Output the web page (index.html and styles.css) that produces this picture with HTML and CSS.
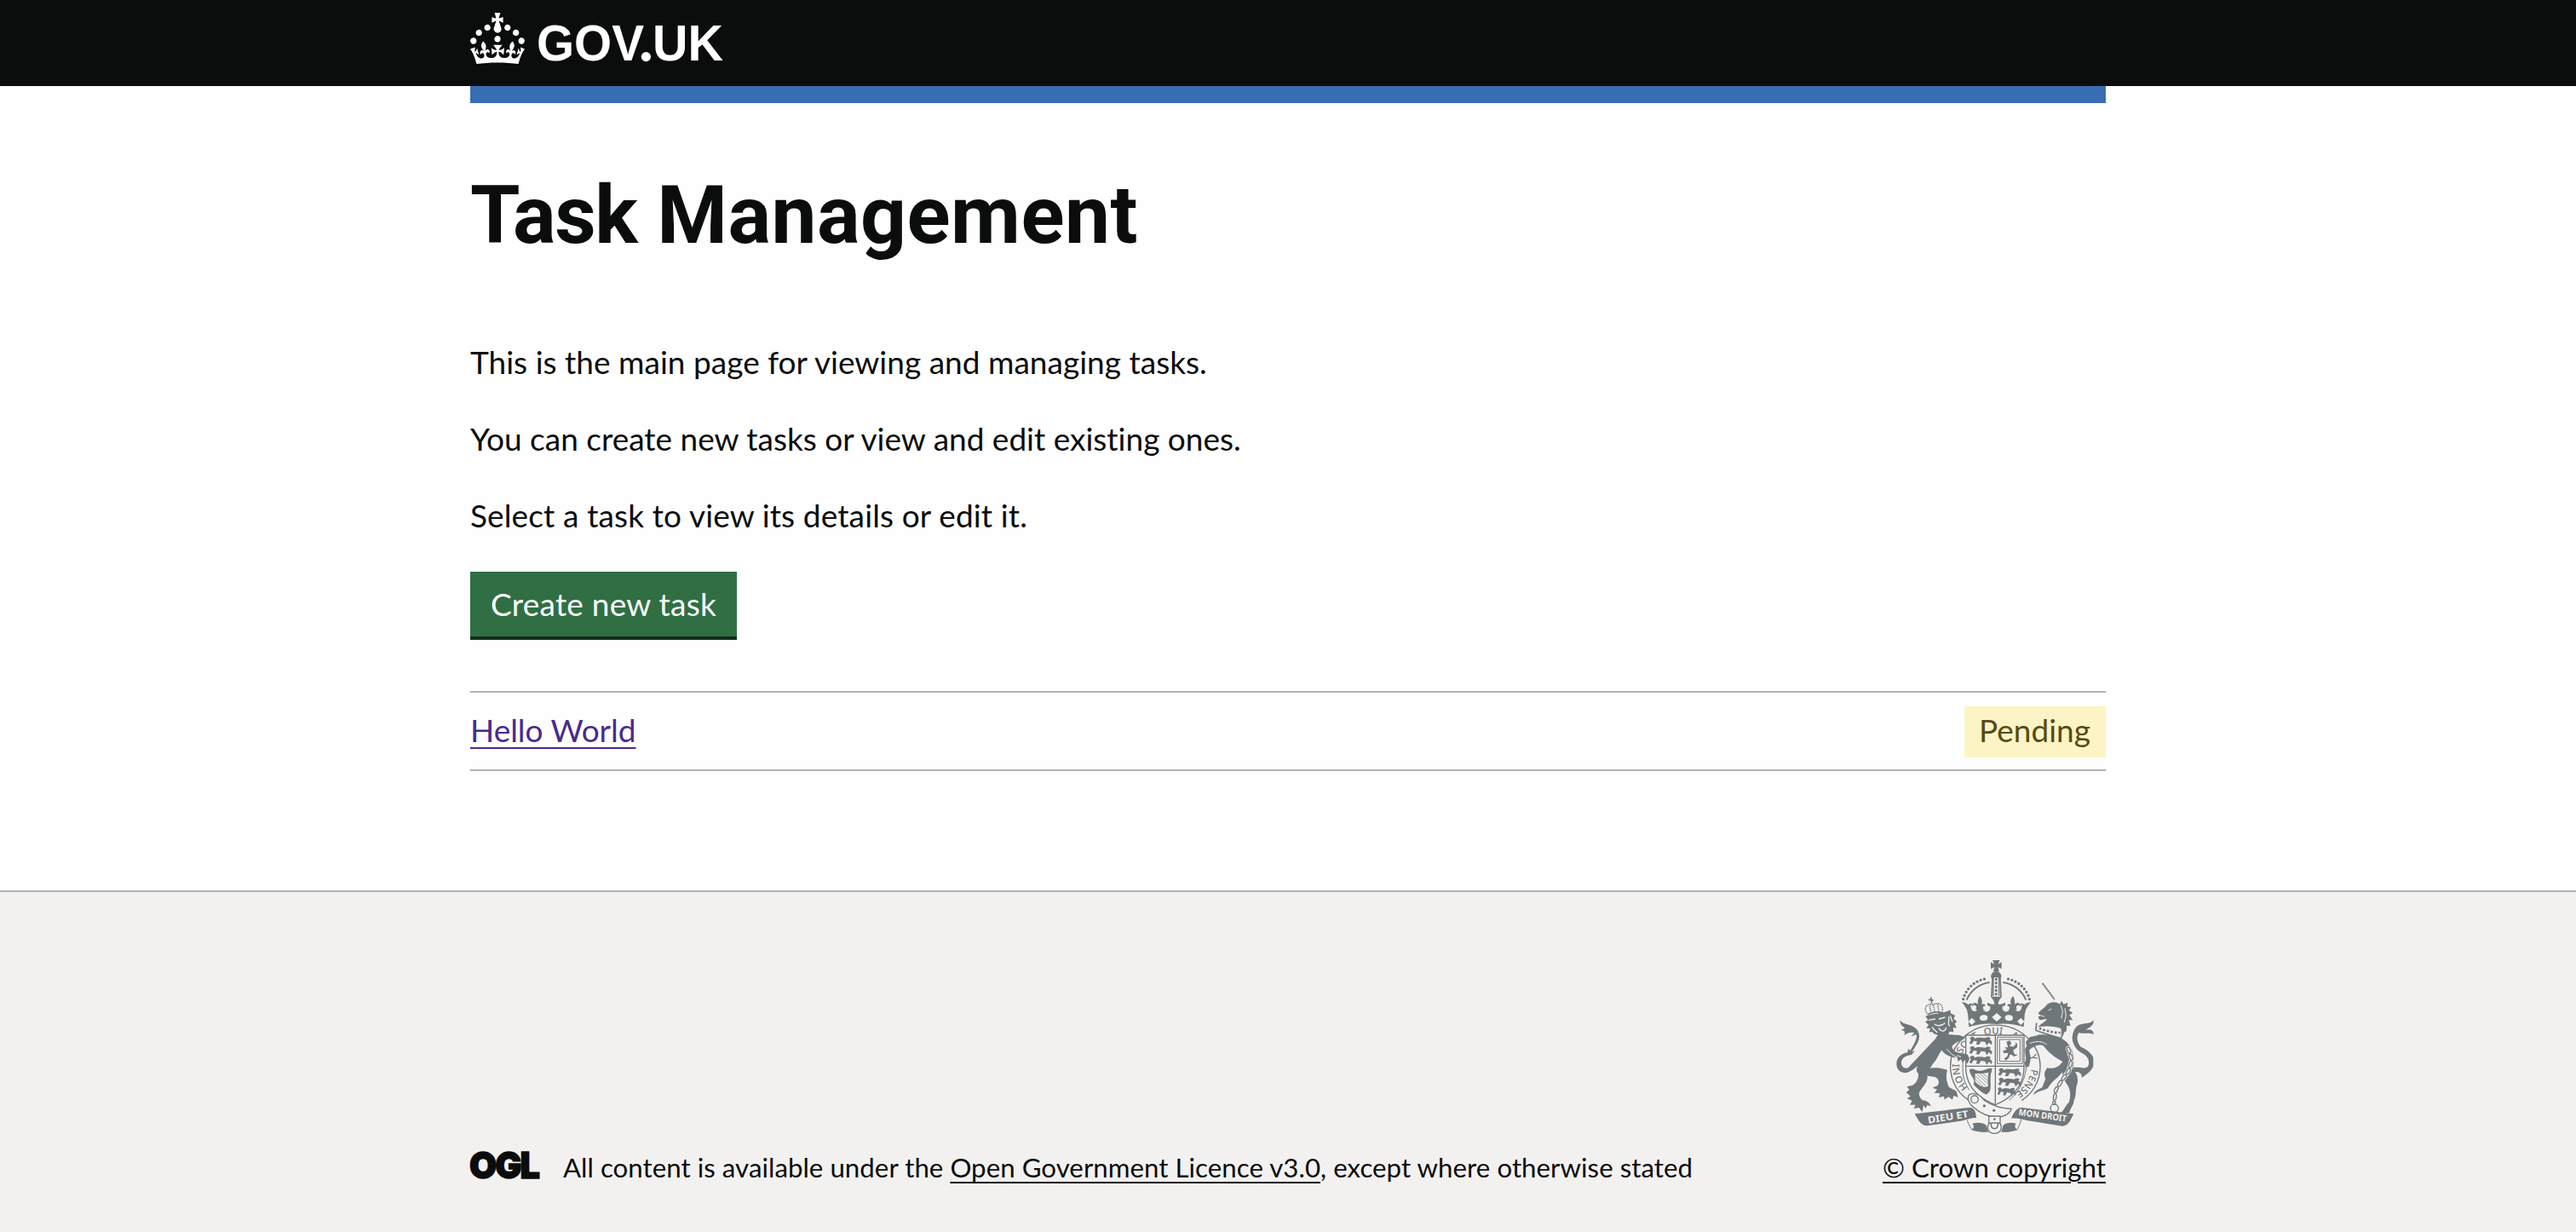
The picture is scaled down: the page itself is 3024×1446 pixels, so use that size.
FILE: index.html
```html
<!DOCTYPE html>
<html lang="en">
<head>
<meta charset="utf-8">
<title>Task Management - GOV.UK</title>
<link rel="stylesheet" href="styles.css">
</head>
<body>
<header class="header">
  <div class="container">
    <a class="header-logo" href="#" aria-label="GOV.UK">
      <svg viewBox="0 0 148 30" width="296" height="60">
        <path fill="#fff" d="M22.6 10.4c-1 .4-2-.1-2.4-1-.4-.9.1-2 1-2.4.9-.4 2 .1 2.4 1s-.1 2-1 2.4m-5.9 6.7c-.9.4-2-.1-2.4-1-.4-.9.1-2 1-2.4.9-.4 2 .1 2.4 1s-.1 2-1 2.4m10.8-3.7c-1 .4-2-.1-2.4-1-.4-.9.1-2 1-2.4.9-.4 2 .1 2.4 1s0 2-1 2.4m3.3 4.8c-1 .4-2-.1-2.4-1-.4-.9.1-2 1-2.4.9-.4 2 .1 2.4 1s-.1 2-1 2.4M17 4.7l2.3 1.2V2.5l-2.3.7-.2-.2.9-3h-3.4l.9 3-.2.2c-.1.1-2.3-.7-2.3-.7v3.4L15 4.7c.1.1.1.2.2.2l-1.3 4c-.1.2-.1.4-.1.6 0 1.1.8 2 1.9 2.2h.7c1-.2 1.9-1.1 1.9-2.1 0-.2 0-.4-.1-.6l-1.3-4c-.1-.2 0-.2.1-.3m-7.6 5.7c.9.4 2-.1 2.4-1 .4-.9-.1-2-1-2.4-.9-.4-2 .1-2.4 1s0 2 1 2.4m-5 3c.9.4 2-.1 2.4-1 .4-.9-.1-2-1-2.4-.9-.4-2 .1-2.4 1s.1 2 1 2.4m-3.2 4.8c.9.4 2-.1 2.4-1 .4-.9-.1-2-1-2.4-.9-.4-2 .1-2.4 1s0 2 1 2.4m14.8 11c4.4 0 8.6.3 12.3.8 1.1-4.5 2.4-7 3.7-8.8l-2.5-.9c.2 1.3.3 1.9 0 2.7-.4-.4-.8-1.1-1.1-2.3l-1.2 4c.7-.5 1.3-.8 2-.9-1.1 2.5-2.6 3.1-3.5 3-1.1-.2-1.7-1.2-1.5-2.1.3-1.2 1.5-1.5 2.1-.1 1.1-2.3-.8-3-2-2.3 1.9-1.9 2.1-3.5.6-5.6-2.1 1.6-2.1 3.2-1.2 5.5-1.2-1.4-3.2-.6-2.5 1.6.9-1.4 2.1-.5 1.9.8-.2 1.1-1.7 2.1-3.5 1.9-2.7-.2-2.9-2.1-2.9-3.6.7-.1 1.9.5 2.9 1.9l.4-4.3c-1.1 1.1-2.1 1.4-3.2 1.4.4-1.2 2.1-3 2.1-3h-5.4s1.7 1.9 2.1 3c-1.1 0-2.1-.2-3.2-1.4l.4 4.3c1-1.4 2.2-2 2.9-1.9-.1 1.5-.2 3.4-2.9 3.6-1.9.2-3.4-.8-3.5-1.9-.2-1.3 1-2.2 1.9-.8.7-2.3-1.2-3-2.5-1.6.9-2.2.9-3.9-1.2-5.5-1.5 2-1.3 3.7.6 5.6-1.2-.7-3.1 0-2 2.3.6-1.4 1.8-1.1 2.1.1.2.9-.3 1.9-1.5 2.1-.9.2-2.4-.5-3.5-3 .6 0 1.2.3 2 .9l-1.2-4c-.3 1.1-.7 1.9-1.1 2.3-.3-.8-.2-1.4 0-2.7l-2.9.9C1.3 23 2.6 25.5 3.7 30c3.7-.5 7.9-.8 12.3-.8"/>
        <text class="logo-text" x="39" y="28"><tspan textLength="63" lengthAdjust="spacingAndGlyphs">GOV</tspan></text>
        <circle cx="103.2" cy="25.8" r="2.8" fill="#fff"/>
        <text class="logo-text" x="107" y="28"><tspan textLength="41.5" lengthAdjust="spacingAndGlyphs">UK</tspan></text>
      </svg>
    </a>
  </div>
</header>

<main class="container main">
  <h1 class="heading"><span class="heading-first">Task</span> Management</h1>
  <p class="body-text body-text-first">This is the main page for viewing and managing tasks.</p>
  <p class="body-text">You can create new tasks or view and edit existing ones.</p>
  <p class="body-text body-text-wide">Select a task to view its details or edit it.</p>
  <button class="button" type="button">Create new task</button>
  <ul class="task-list">
    <li class="task">
      <a class="task-link" href="#">Hello World</a>
      <strong class="tag">Pending</strong>
    </li>
  </ul>
</main>

<footer class="footer">
  <div class="container footer-row">
    <div class="licence">
      <svg class="ogl" viewBox="0 0 83 34" width="83" height="34" role="img" aria-label="OGL">
        <text class="ogl-text" x="-1" y="32.2" textLength="81" lengthAdjust="spacingAndGlyphs">OGL</text>
      </svg>
      <span class="licence-text">All content is available under the <a class="footer-link" href="#">Open Government Licence v3.0</a>, except where otherwise stated</span>
    </div>
    <div class="copyright">
      <svg class="crest" viewBox="75 45 705 621" width="235" height="207" aria-hidden="true">
        <defs>
          <path id="garter" d="M427 537A127 113 0 0 1 300 424A127 113 0 0 1 427 311A127 113 0 0 1 554 424A127 113 0 0 1 427 537"/>
          <g id="beast">
            <path d="M2 8C8 0 18 2 20 10C28 4 42 6 56 8C64 4 72 2 76 10L70 14C80 16 84 24 78 32L70 24L62 34L56 22L42 20L34 32L24 30L28 20L16 18L8 30L0 26L6 16Z"/>
          </g>
          <g id="half-crown">
            <path class="line" stroke-width="6" d="M326 191C340 158 370 134 407 129"/>
            <path class="dots" d="M314 188C324 150 356 120 402 115"/>
            <path class="line" stroke-width="5" d="M417 116L414 180"/>
            <path d="M432 240H330L327 226C322 216 316 207 309 198C318 200 326 202 332 207C338 202 344 202 349 208L344 222C352 232 362 226 360 214C354 206 346 212 348 204C354 198 362 202 365 207C366 196 364 190 372 177C382 190 382 198 378 208C384 202 392 204 392 212C386 212 380 216 386 224C394 232 404 224 408 212C400 214 396 206 400 200C408 204 416 208 424 206C424 196 418 188 411 180H432Z"/>
            <path class="hole" d="M340 208C348 210 350 228 364 226C356 236 340 232 340 208ZM384 226C394 228 404 222 409 212C412 232 394 238 384 226Z"/>
            <path d="M330 236H432V276C398 272 366 276 334 286Z"/>
            <ellipse class="hole" cx="386" cy="254" rx="14" ry="10" transform="rotate(-8 386 254)"/>
            <path class="hole" d="M344 254L357 266L344 279L332 267Z"/>
          </g>
        </defs>

        <g class="ink">
          <!-- crown -->
          <path d="M417 51H443L436 65L449 58V82L436 75L441 90H419L425 75L411 82V58L424 65Z"/>
          <path d="M412 112C410 98 420 90 430 90C440 90 450 98 448 112L442 122V178H418V122Z"/>
          <path class="cut" stroke-width="16" d="M430 112V178"/>
          <path class="line" stroke-width="8" stroke-dasharray="9 4" d="M430 114V177"/>
          <use href="#half-crown"/>
          <use href="#half-crown" transform="translate(861 0) scale(-1 1)"/>
          <path class="hole" d="M432 237L449 252L432 267L415 252Z"/>

          <!-- garter -->
          <path class="line" stroke-width="4" d="M334 545A158 147 0 1 1 520 545"/>
          <path class="line" stroke-width="3" d="M335 508C316 480 308 450 314 400M536 400C540 450 520 506 476 544"/>
          <text class="motto"><textPath href="#garter" startOffset="106">HONI</textPath></text>
          <text class="motto"><textPath href="#garter" startOffset="232">SO</textPath></text>
          <text class="motto"><textPath href="#garter" startOffset="298">T</textPath></text>
          <text class="motto"><textPath href="#garter" startOffset="338">QUI</textPath></text>
          <text class="motto"><textPath href="#garter" startOffset="432">A</textPath></text>
          <text class="motto"><textPath href="#garter" startOffset="527">Y</textPath></text>
          <text class="motto"><textPath href="#garter" startOffset="576">PENSE</textPath></text>

          <!-- shield -->
          <path class="panel" d="M323 315H528V432C526 480 500 530 427 560C350 530 325 480 323 432Z"/>
          <path class="line" stroke-width="4" d="M427 315V556M323 424H528"/>
          <use href="#beast" transform="translate(335 317)"/>
          <use href="#beast" transform="translate(335 351)"/>
          <use href="#beast" transform="translate(335 385)"/>
          <use href="#beast" transform="translate(437 428)"/>
          <use href="#beast" transform="translate(437 462)"/>
          <use href="#beast" transform="translate(434 496) scale(.82 1)"/>
          <path class="line" stroke-width="3" d="M434 322H522V415H434ZM442 330H514V407H442Z"/>
          <path d="M466 338L478 334L484 346L476 352L490 356L500 346L494 340L504 344L504 358L490 368L494 382L506 384L494 390L480 382L474 396L464 404L458 398L470 388L472 378L456 378L454 370L468 366L460 358L472 358Z"/>
          <path d="M336 436C346 428 358 440 372 440C388 442 402 428 416 432L413 446C406 460 414 490 408 512L396 524C384 520 366 506 350 488C360 470 336 458 336 436Z"/>
          <path class="hole" d="M356 450C376 450 388 450 403 446C400 466 400 484 402 494C388 504 364 490 356 478Z"/>
          <path class="line" stroke-width="2" d="M362 452L400 486M372 451L401 476M384 451L400 464M358 460L394 494M357 470L384 496"/>

          <!-- lion -->
          <path d="M212 334L226 312H262L302 316L250 344Z"/>
          <path d="M231 330C250 322 268 322 284 318C294 310 306 316 322 324L308 334C294 336 280 346 274 356L280 368C300 382 318 376 330 384L336 398L328 416L320 402L312 412L306 400L296 408L292 394C270 394 250 384 238 368C228 380 224 394 214 408C202 420 192 440 188 456C190 478 176 492 166 506C152 520 160 534 170 544C186 546 196 552 200 566L188 560L182 572L174 562L170 586L158 570L140 574L146 560L126 560L134 546L116 538L128 530L113 516L124 508L116 496L134 492C146 486 158 472 156 450C150 446 146 436 154 424C146 428 136 440 118 446C96 452 80 438 79 418C78 396 96 378 118 376L120 362L132 374L144 370L132 384C112 388 98 392 96 412C96 428 108 434 120 430L212 332Z"/>
          <path d="M192 432C220 426 244 432 258 438C252 456 254 480 264 498L290 512L296 534L280 528L276 542L262 532L248 542L246 530L228 534L232 520L212 518L222 506L206 500L224 492C232 478 226 466 214 462L188 458Z"/>
          <path d="M92 262C104 282 126 272 148 292C168 314 160 344 132 366C142 342 154 326 148 312L130 320L142 306C132 304 118 304 106 316C112 302 104 296 94 298L108 290C98 282 90 276 92 262Z"/>
          <path class="line" stroke-width="8" d="M152 330C148 348 136 360 126 380"/>
          <path d="M181 248C200 240 246 238 268 226L270 238L286 246L280 256L292 268L284 274L290 290L278 288L280 304L266 302L258 318L240 318C222 314 208 312 206 304L194 304L198 292L184 290L192 278L180 268L190 262Z"/>
          <path class="cut" stroke-width="4" d="M192 262L216 258M228 258L250 252M212 276C224 284 236 284 250 272M228 290C236 304 250 304 254 288M262 250C268 262 256 272 266 284M204 286C208 296 220 300 222 306M268 246L276 268"/>
          <path class="line" stroke-width="5" stroke-dasharray="4 3" d="M186 238C174 218 184 202 208 208C228 196 246 208 240 232M208 208L214 234M196 212L200 234M224 206L228 232"/>
          <path class="line" stroke-width="5" d="M188 242C206 232 224 232 243 236M200 181L203 204M192 190L210 192"/>
          <path class="cut" stroke-width="3" d="M256 364C268 378 282 390 294 394M292 386L306 392"/>

          <!-- unicorn -->
          <path class="line" stroke-width="6" stroke-dasharray="8 2" d="M593 132L636 190"/>
          <path d="M578 240C582 228 598 222 606 210C620 196 640 196 654 206L660 194L668 206L682 200L680 214L694 216L686 228L700 236L688 244L700 262L686 262L692 282L678 282L678 300L664 308L656 318C660 308 662 298 656 290C640 286 612 280 578 286C586 274 606 268 608 258C598 256 592 264 582 260L578 250L590 246Z"/>
          <path class="cut" stroke-width="3" d="M614 228L624 222M658 210L664 230L660 256M672 220L676 246L670 270M590 246L600 250"/>
          <path class="line" stroke-width="5" d="M572 272L570 298C594 308 630 318 658 326L668 304"/>
          <path class="line" stroke-width="8" stroke-dasharray="8 6" d="M582 290C604 300 630 306 656 306"/>
          <path d="M576 314C602 310 634 318 660 326C686 340 704 368 704 408L700 434C714 448 720 464 716 486C708 500 714 526 704 544C704 560 690 574 688 588H658C672 576 674 562 686 552C694 530 692 502 678 486C666 470 660 456 664 444L648 462C632 476 620 486 612 502C596 510 576 512 560 526C564 506 592 504 594 494L604 468C594 448 606 436 610 430C636 436 654 424 664 408C636 394 612 374 596 352C580 344 560 354 546 368L552 396L546 424L534 430L530 412C540 400 530 384 532 362C540 346 560 342 576 334Z"/>
          <path d="M576 316L548 322L534 340L538 354L580 336Z"/>
          <path class="cut" stroke-width="3" d="M548 344C572 334 592 336 608 348"/>
          <path d="M773 262C776 280 758 288 746 296C768 294 772 300 774 312C758 304 738 312 722 306C710 320 716 342 728 356C746 364 764 376 772 394V424C764 446 744 454 732 466C732 448 722 442 704 444L700 430C722 424 744 438 754 424C762 404 750 388 736 380C714 370 698 348 698 324C700 296 712 278 732 276C750 272 764 274 773 262Z"/>
          <path class="chain-gap" d="M684 362L696 402L686 440L660 476L640 508L634 554"/>
          <path class="chain" d="M684 362L696 402L686 440L660 476L640 508L634 554"/>
          <path class="chain-eye" d="M684 362L696 402L686 440L660 476L640 508L634 554"/>
          <circle class="line" stroke-width="4" cx="635" cy="572" r="14"/>

          <!-- ribbon -->
          <path d="M143 592L332 570C346 568 358 574 360 606C334 606 328 614 300 618L186 634C166 634 158 618 143 592Z"/>
          <path d="M703 592L520 570C504 568 488 590 484 608C516 606 530 616 556 618L662 635C684 636 692 614 703 592Z"/>
          <text class="ribbon-text" transform="translate(191 626) rotate(-9)" textLength="144" lengthAdjust="spacingAndGlyphs">DIEU ET</text>
          <text class="ribbon-text ribbon-small" transform="translate(508 596) rotate(8)" textLength="170" lengthAdjust="spacingAndGlyphs">MON DROIT</text>
          <path d="M346 626C362 622 386 622 396 634L402 656C380 658 356 654 344 648C352 640 354 634 346 626ZM500 626C484 622 464 622 454 634L448 656C470 658 490 654 504 648C496 640 494 634 500 626Z"/>
          <path class="line" stroke-width="3" d="M328 614C332 630 340 640 346 650M518 612C514 630 508 640 502 650"/>

          <!-- buckle and strap -->
          <path class="panel" d="M336 524C356 516 374 526 388 544C416 562 440 572 484 574C478 592 456 604 432 604C400 602 372 588 352 570C332 556 326 534 336 524Z"/>
          <circle class="line" stroke-width="4" cx="354" cy="541" r="13"/>
          <circle cx="388" cy="564" r="5"/><circle cx="422" cy="580" r="5"/>
          <path class="panel" d="M404 600H444V626C452 640 448 661 424 661C400 661 396 640 404 626Z"/>
          <path class="line" stroke-width="5" d="M412 626C408 650 440 650 436 626M404 624H444"/>
          <circle cx="424" cy="611" r="4"/>
        </g>
      </svg>
      <a class="footer-link" href="#">© Crown copyright</a>
    </div>
  </div>
</footer>
</body>
</html>
```
FILE: styles.css
```css
* { box-sizing: border-box; }

body {
  margin: 0;
  min-height: 1446px;
  display: flex;
  flex-direction: column;
  background: #fefefe;
  color: #0b0c0c;
  font-family: Lato, "Liberation Sans", sans-serif;
  font-size: 37px;
  line-height: 48px;
  font-variant-ligatures: none;
}

.container { width: 1920px; margin: 0 auto; }

.header { height: 101px; background: #0b0d0c; }
.header-logo { display: block; padding-top: 15px; }
.header-logo svg { display: block; overflow: visible; }
.logo-text { font: 700 29.3px "Liberation Sans", sans-serif; fill: #fff; }

.main {
  border-top: 20px solid #386db3;
  padding-top: 80px;
}

.heading {
  margin: 0 0 98px;
  padding-top: 2px;
  font: 700 94.5px/100px Roboto, sans-serif;
  letter-spacing: 0.5px;
}
.heading-first { letter-spacing: -1.5px; }

.body-text { margin: 0 0 42px; }
.body-text-first { letter-spacing: 0.02px; }
.body-text-wide { letter-spacing: 0.13px; }

.button {
  display: block;
  margin: 0;
  padding: 14px 24px;
  border: 0;
  background: #306f43;
  box-shadow: 0 4px 0 #122d1b;
  color: #fff;
  font: inherit;
  letter-spacing: 0.24px;
}

.task-list {
  margin: 64px 0 140px;
  padding: 0;
  list-style: none;
  border-top: 2px solid #b3b3b3;
}
.task {
  display: flex;
  justify-content: space-between;
  align-items: flex-start;
  height: 92px;
  padding-top: 16px;
  border-bottom: 2px solid #b3b3b3;
}
.task-link {
  padding-top: 4px;
  color: #482b8d;
  letter-spacing: -0.03px;
  text-decoration: underline;
  text-decoration-thickness: 2px;
  text-underline-offset: 6px;
}
.tag {
  height: 60px;
  padding: 4px 18px 4px 17px;
  background: #fdf4c5;
  color: #574a16;
  font-weight: 400;
}

.footer {
  flex: 1;
  padding: 78px 0 56px;
  border-top: 2px solid #b3b3b3;
  background: #f3f1f0;
  font-size: 31.25px;
  line-height: 40px;
}
.footer-row {
  display: flex;
  justify-content: space-between;
  align-items: flex-end;
}
.licence { display: flex; align-items: flex-end; gap: 26px; }
.licence-text { letter-spacing: 0.025px; }
.ogl { display: block; margin-bottom: 5px; overflow: visible; }
.ogl-text {
  font: 900 43px Inter, sans-serif;
  fill: #0b0c0c;
  stroke: #0b0c0c;
  stroke-width: 1.5px;
  letter-spacing: -2px;
}
.footer-link {
  color: inherit;
  text-decoration: underline;
  text-decoration-thickness: 2px;
  text-underline-offset: 5px;
}
.copyright {
  display: flex;
  flex-direction: column;
  align-items: center;
  gap: 18px;
}

.crest { display: block; margin-left: 3px; }
.ink { fill: #6f777a; }
.line { fill: none; stroke: #6f777a; }
.dots { fill: none; stroke: #6f777a; stroke-width: 10px; stroke-linecap: round; stroke-dasharray: 0 13.5; }
.hole { fill: #f3f1f0; }
.cut { fill: none; stroke: #f3f1f0; }
.panel { fill: #f3f1f0; stroke: #6f777a; stroke-width: 4px; }
.chain { fill: none; stroke: #6f777a; stroke-width: 14px; stroke-linecap: round; stroke-dasharray: 12 14; }
.chain-eye { fill: none; stroke: #f3f1f0; stroke-width: 6px; stroke-linecap: round; stroke-dasharray: 12 14; }
.chain-gap { fill: none; stroke: #f3f1f0; stroke-width: 18px; stroke-linecap: round; }
.motto { font: 500 34px "Noto Sans", sans-serif; }
.ribbon-text { font: 700 34px "Noto Sans", sans-serif; fill: #f3f1f0; }
.ribbon-small { font-size: 31px; }
```
